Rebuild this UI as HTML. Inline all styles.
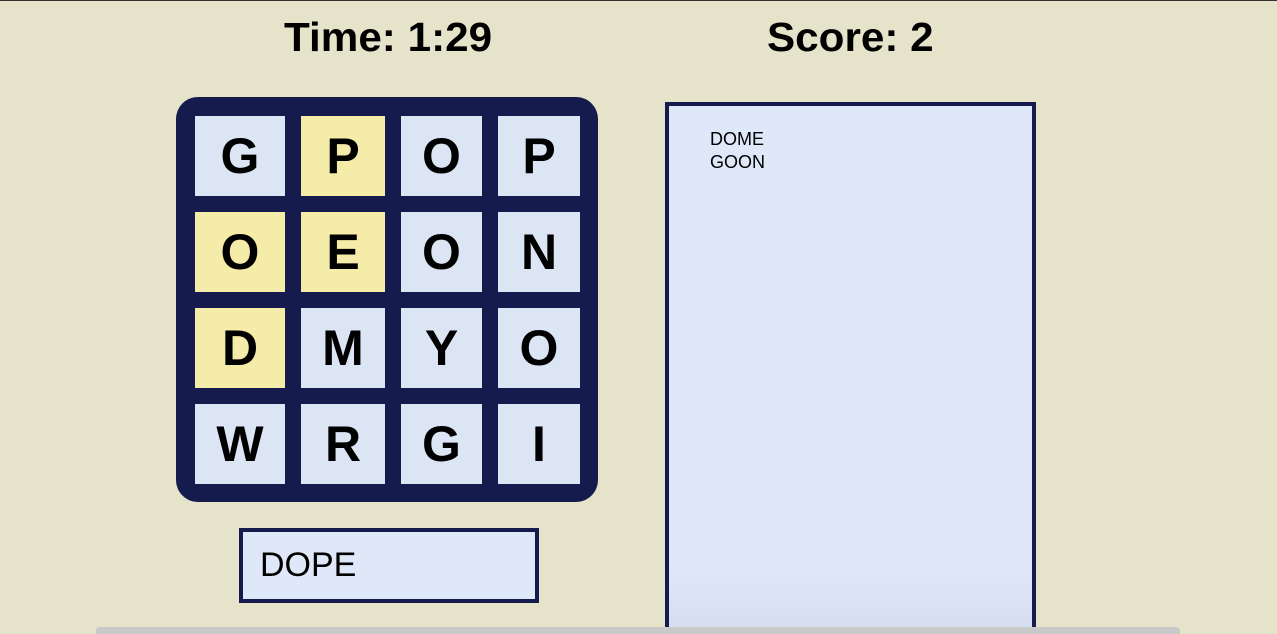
<!DOCTYPE html>
<html><head><style>
html,body{margin:0;width:1277px;height:634px;overflow:hidden}
body{background:#e5e3c9;position:relative;font-family:"Liberation Sans",Arial,sans-serif}
.h{position:absolute;top:14px;font-size:41px;font-weight:bold;color:#000;transform:scaleX(1.03);transform-origin:left}
.board{position:absolute;left:176px;top:97px;width:422px;height:405px;background:#151b4c;border-radius:22px}
.c{position:absolute;background:#dce5f4;font-weight:bold;font-size:50px;display:flex;align-items:center;justify-content:center;color:#000}
.y{background:#f4eca8}
.inp{position:absolute;left:239px;top:528px;height:67px;border:4px solid #151b4c;background:#dfe8f8;font-size:34px;line-height:67px;padding-left:17px;width:275px}
.list{position:absolute;left:665px;top:102px;width:363px;height:540px;border:4px solid #151b4c;background:linear-gradient(#dfe8f8 85%,#d3dcee);font-size:18px;line-height:23px}
.dock{position:absolute;left:96px;top:627px;width:1084px;height:10px;background:#c9c9c9;border-radius:4px}
</style></head><body>
<div style="position:absolute;left:0;top:0;width:1277px;height:1px;background:#333"></div>
<div class="h" style="left:284px">Time: 1:29</div>
<div class="h" style="left:767px">Score: 2</div>
<div class="board"></div>
<div class="c" style="left:195px;top:116px;width:90px;height:80px">G</div>
<div class="c y" style="left:301px;top:116px;width:84px;height:80px">P</div>
<div class="c" style="left:401px;top:116px;width:81px;height:80px">O</div>
<div class="c" style="left:498px;top:116px;width:82px;height:80px">P</div>
<div class="c y" style="left:195px;top:212px;width:90px;height:80px">O</div>
<div class="c y" style="left:301px;top:212px;width:84px;height:80px">E</div>
<div class="c" style="left:401px;top:212px;width:81px;height:80px">O</div>
<div class="c" style="left:498px;top:212px;width:82px;height:80px">N</div>
<div class="c y" style="left:195px;top:308px;width:90px;height:80px">D</div>
<div class="c" style="left:301px;top:308px;width:84px;height:80px">M</div>
<div class="c" style="left:401px;top:308px;width:81px;height:80px">Y</div>
<div class="c" style="left:498px;top:308px;width:82px;height:80px">O</div>
<div class="c" style="left:195px;top:404px;width:90px;height:80px">W</div>
<div class="c" style="left:301px;top:404px;width:84px;height:80px">R</div>
<div class="c" style="left:401px;top:404px;width:81px;height:80px">G</div>
<div class="c" style="left:498px;top:404px;width:82px;height:80px">I</div>
<div class="inp">DOPE</div>
<div class="list"><div style="position:absolute;left:41px;top:22px">DOME<br>GOON</div></div>
<div class="dock"></div>
</body></html>
